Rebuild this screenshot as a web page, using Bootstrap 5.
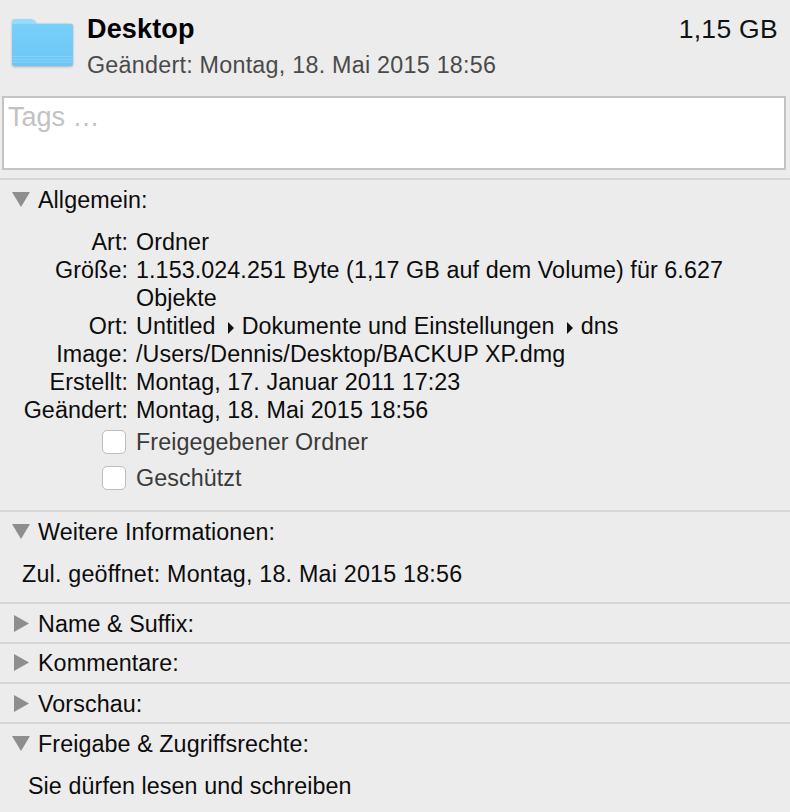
<!DOCTYPE html>
<html lang="de">
<head>
<meta charset="utf-8">
<title>Desktop Informationen</title>
<link rel="stylesheet" href="https://cdn.jsdelivr.net/npm/bootstrap@5.3.0/dist/css/bootstrap.min.css">
<style>
html,body{margin:0;height:812px;overflow:hidden}
body{background:#ececec;color:#0c0c0c;font-family:"Liberation Sans",Arial,sans-serif;font-size:23.3px;letter-spacing:.08px;line-height:28px}
.head-row{height:96px;padding:0 12px 0 12px}
.folder-ico{margin-top:16px;flex:none;filter:drop-shadow(0 1px 1px rgba(0,0,0,.25))}
.head-text{margin-left:14px;margin-top:14px}
.head-name{font-size:27px;font-weight:700;line-height:30px;color:#000;letter-spacing:.15px}
.head-sub{color:#4a4a4a;margin-top:7px;letter-spacing:.25px}
.head-size{margin-top:15px;font-size:26.5px;letter-spacing:.3px;color:#111}
.tag-box{height:74px;margin:0 4px 0 2px;background:#fff;border:2px solid #c4c4c4;padding:3px 4px;font-size:27px;letter-spacing:0;line-height:32px;color:#c2c2c2}
.sec{border-top:2px solid #d6d6d6}
.sec-title{height:38px;padding-left:12px;padding-top:2px;line-height:28px}
.sec-title-up{padding-top:0;padding-bottom:1px}
.tri{width:18px;height:18px;flex:none;margin-right:8px}
.info-grid{display:grid;grid-template-columns:128px 1fr;column-gap:8px;padding:0 50px 0 0}
.info-grid .lab{text-align:right}
.sep-arrow{display:inline-block;width:0;height:0;border-left:6px solid #111;border-top:6px solid transparent;border-bottom:6px solid transparent;margin:0 8px 0 12px}
.chk-row{height:36px;color:#3a3a3a}
.chk-box{width:24px;height:24px;background:#fff;border:1px solid #bcbcbc;border-radius:5px;margin-left:102px;margin-right:10px;flex:none}
.pad-gen{height:292px;padding-top:10px}
.pad-more{height:52px;padding:10px 0 0 22px;letter-spacing:.2px}
.pad-share{padding:10px 0 0 28px}
.sec-closed{height:40px}
</style>
</head>
<body>
<div class="d-flex head-row">
  <svg class="folder-ico" width="61" height="50" viewBox="0 0 62 52" preserveAspectRatio="none" aria-hidden="true">
    <defs><linearGradient id="fg" x1="0" y1="0" x2="0" y2="1"><stop offset="0" stop-color="#78d0fa"/><stop offset="1" stop-color="#6cc5f5"/></linearGradient></defs>
    <path d="M0 6q0-3 3-3h16q3 0 5 3l1 2h34q3 0 3 3v40H0z" fill="#98dcfd"/>
    <path d="M0 10q0-2 2-2h58q2 0 2 2v39q0 3-3 3H3q-3 0-3-3z" fill="url(#fg)"/>
    <path d="M0 42h62M0 45h62M0 48h62" stroke="#8ad4fa" stroke-width="1"/>
  </svg>
  <div class="head-text flex-grow-1">
    <div class="head-name">Desktop</div>
    <div class="head-sub">Geändert: Montag, 18. Mai 2015 18:56</div>
  </div>
  <div class="head-size">1,15 GB</div>
</div>
<div class="tag-box">Tags …</div>
<div class="sec mt-2">
  <div class="sec-title d-flex align-items-center"><svg class="tri" viewBox="0 0 18 18" aria-hidden="true"><path d="M0 1h18L9 16z" fill="#8e8e8e"/></svg>Allgemein:</div>
  <div class="pad-gen">
    <div class="info-grid">
      <div class="lab">Art:</div><div>Ordner</div>
      <div class="lab">Größe:</div><div>1.153.024.251 Byte (1,17 GB auf dem Volume) für 6.627 Objekte</div>
      <div class="lab">Ort:</div><div>Untitled<span class="sep-arrow"></span>Dokumente und Einstellungen<span class="sep-arrow"></span>dns</div>
      <div class="lab">Image:</div><div>/Users/Dennis/Desktop/BACKUP XP.dmg</div>
      <div class="lab">Erstellt:</div><div>Montag, 17. Januar 2011 17:23</div>
      <div class="lab">Geändert:</div><div>Montag, 18. Mai 2015 18:56</div>
    </div>
    <div class="chk-row d-flex align-items-center"><span class="chk-box"></span>Freigegebener Ordner</div>
    <div class="chk-row d-flex align-items-center"><span class="chk-box"></span>Geschützt</div>
  </div>
</div>
<div class="sec">
  <div class="sec-title d-flex align-items-center"><svg class="tri" viewBox="0 0 18 18" aria-hidden="true"><path d="M0 1h18L9 16z" fill="#8e8e8e"/></svg>Weitere Informationen:</div>
  <div class="pad-more">Zul. geöffnet: Montag, 18. Mai 2015 18:56</div>
</div>
<div class="sec sec-closed"><div class="sec-title d-flex align-items-center"><svg class="tri" viewBox="0 0 18 18" aria-hidden="true"><path d="M2 0l15 8.5L2 17z" fill="#8e8e8e"/></svg>Name &amp; Suffix:</div></div>
<div class="sec sec-closed"><div class="sec-title sec-title-up d-flex align-items-center"><svg class="tri" viewBox="0 0 18 18" aria-hidden="true"><path d="M2 0l15 8.5L2 17z" fill="#8e8e8e"/></svg>Kommentare:</div></div>
<div class="sec sec-closed"><div class="sec-title d-flex align-items-center"><svg class="tri" viewBox="0 0 18 18" aria-hidden="true"><path d="M2 0l15 8.5L2 17z" fill="#8e8e8e"/></svg>Vorschau:</div></div>
<div class="sec">
  <div class="sec-title d-flex align-items-center"><svg class="tri" viewBox="0 0 18 18" aria-hidden="true"><path d="M0 1h18L9 16z" fill="#8e8e8e"/></svg>Freigabe &amp; Zugriffsrechte:</div>
  <div class="pad-share">Sie dürfen lesen und schreiben</div>
</div>
<script src="https://cdn.jsdelivr.net/npm/bootstrap@5.3.0/dist/js/bootstrap.bundle.min.js"></script>
</body>
</html>
